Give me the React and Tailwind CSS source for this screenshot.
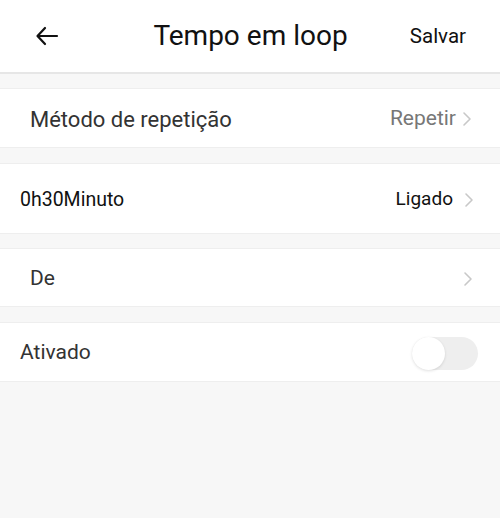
import React, { useState } from 'react';

const Chevron = ({ gap = 'ml-[8px]' }) => (
  <svg width="10" height="16" viewBox="0 0 10 16" fill="none" className={gap}>
    <path d="M2 2l6 6-6 6" stroke="#c8c8c8" strokeWidth="1.6" strokeLinecap="round" strokeLinejoin="round" />
  </svg>
);

const Row = ({ className, children }) => (
  <div className={`flex items-center justify-between border-y border-[#eeeeee] bg-white pt-[2px] ${className}`}>
    {children}
  </div>
);

const App = () => {
  const [enabled, setEnabled] = useState(false);

  return (
    <div className="min-h-[518px] bg-[#f7f7f7] font-['Roboto',sans-serif]">
      <div className="flex h-[74px] items-center border-b-2 border-[#e6e6e6] bg-white pl-[35px] pr-[34px]">
        <div className="w-[90px]">
          <svg width="24" height="20" viewBox="0 0 24 20" fill="none">
            <path d="M22 10H3M10 2L2.5 10l7.5 8" stroke="#111" strokeWidth="2.2" strokeLinecap="round" strokeLinejoin="round" />
          </svg>
        </div>
        <h1 className="flex-1 text-center text-[28px] text-[#111]">Tempo em loop</h1>
        <button className="w-[90px] text-right text-[20.5px] text-[#111]">Salvar</button>
      </div>

      <Row className="mt-[14px] h-[60px] pl-[30px] pr-[28px]">
        <span className="text-[22px] text-[#333]">Método de repetição</span>
        <span className="flex items-center text-[21px] text-[#777]">
          Repetir
          <Chevron gap="ml-[6px]" />
        </span>
      </Row>

      <Row className="mt-[15px] h-[71px] pl-[20px] pr-[26px]">
        <span className="text-[19.5px] text-[#111]">0h30Minuto</span>
        <span className="flex items-center text-[19px] text-[#111]">
          Ligado
          <Chevron gap="ml-[11px]" />
        </span>
      </Row>

      <Row className="mt-[14px] h-[59px] pl-[30px] pr-[27px]">
        <span className="text-[21px] text-[#333]">De</span>
        <Chevron />
      </Row>

      <Row className="mt-[15px] h-[60px] pl-[20px] pr-[22px]">
        <span className="text-[21px] text-[#333]">Ativado</span>
        <button
          onClick={() => setEnabled(!enabled)}
          className={`relative h-[33px] w-[66px] rounded-full ${enabled ? 'bg-[#4cd964]' : 'bg-[#eeeeee]'}`}
        >
          <span
            className={`absolute top-0 h-[33px] w-[33px] rounded-full bg-white shadow-[0_1px_3px_rgba(0,0,0,0.12)] ${enabled ? 'right-0' : 'left-0'}`}
          />
        </button>
      </Row>
    </div>
  );
};

export default App;
